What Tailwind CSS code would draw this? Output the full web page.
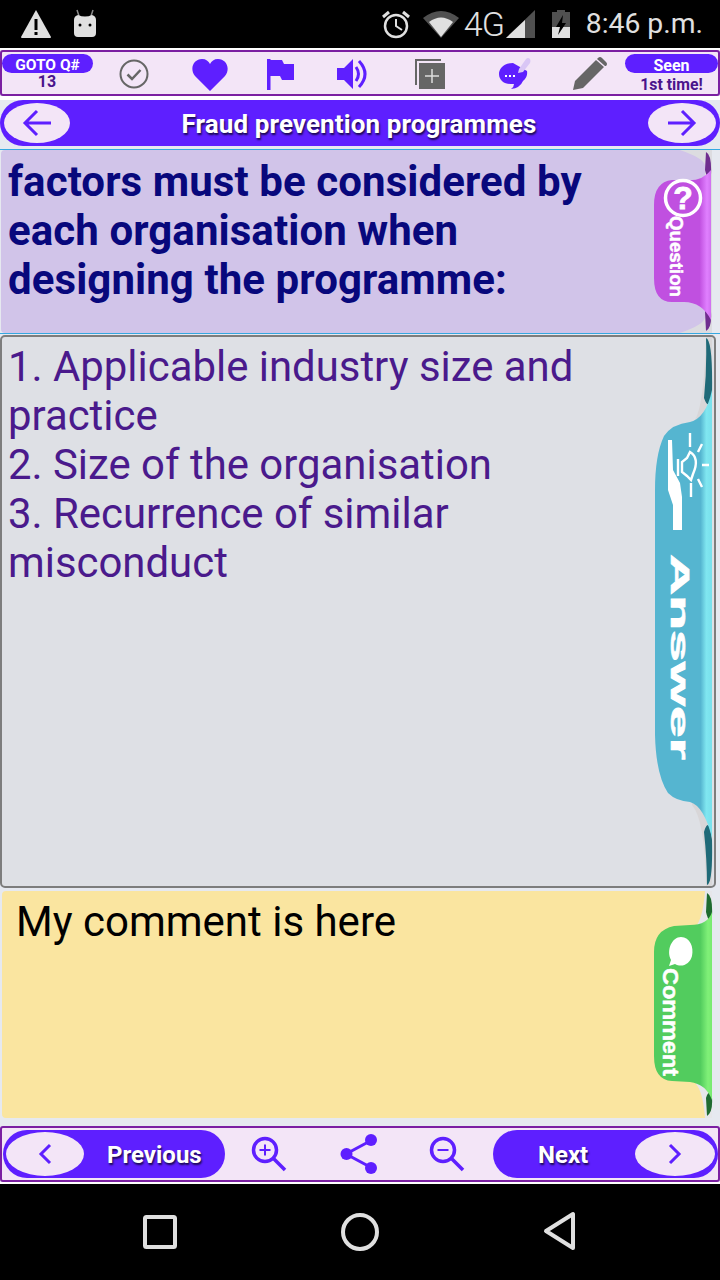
<!DOCTYPE html>
<html lang="en">
<head>
    <meta charset="utf-8">
    <title>Fraud prevention programmes</title>
    <script src="https://cdn.jsdelivr.net/npm/@tailwindcss/browser@4"></script>
</head>

<body class="w-[720px] h-[1280px] overflow-hidden bg-[#e6e9f0] font-['Roboto',sans-serif]">
    <div class="flex flex-col w-[720px] h-[1280px]">

        <!-- Status bar -->
        <div class="relative flex items-center justify-between h-[48px] bg-black text-[#e0e0e0]">
            <div class="flex items-center pl-[20px] gap-[21px]">
                <svg width="32" height="30" viewBox="0 0 32 30"><path d="M16 1 L31 28 Q31 29 30 29 L2 29 Q1 29 1 28 Z" fill="#e0e0e0"/><rect x="14.500" y="10" width="3" height="11" fill="#000"/><rect x="14.500" y="23" width="3" height="3" fill="#000"/></svg>
                <svg width="24" height="30" viewBox="0 0 24 30"><path d="M4 1 L6 7 M20 1 L18 7" stroke="#8a8a8a" stroke-width="1.500"/><path d="M5 6 Q12 9 19 6 Q23 7 23 11 L23 24 Q23 28 19 28 L5 28 Q1 28 1 24 L1 11 Q1 7 5 6 Z" fill="#e0e0e0"/><circle cx="7" cy="16" r="1.500" fill="#000"/><circle cx="17" cy="16" r="1.500" fill="#000"/></svg>
            </div>
            <div class="flex items-center pr-[17px]">
                <svg width="30" height="30" viewBox="0 0 30 30" fill="none" stroke="#e0e0e0"><circle cx="15" cy="17" r="11" stroke-width="2.500"/><path d="M15 10 L15 17 L21 21" stroke-width="2"/><path d="M2 8 L8 3 M28 8 L22 3" stroke-width="3"/></svg>
                <svg class="ml-[12px]" width="36" height="28" viewBox="0 0 36 28"><path d="M0 8 Q18 -6 36 8 L18 28 Z" fill="#505050"/><path d="M6 12 Q18 3 30 12 L18 27 Z" fill="#e0e0e0"/></svg>
                <span class="ml-[5px] w-[41px] text-[34px] leading-[34px] tracking-[-1px] font-light">4G</span>
                <svg class="ml-[1px]" width="30" height="30" viewBox="0 0 30 30"><path d="M0 29 L29 1 L29 29 Z" fill="#505050"/><path d="M0 29 L19 11 L19 29 Z" fill="#e0e0e0"/></svg>
                <svg class="ml-[15px]" width="20" height="30" viewBox="0 0 20 30"><path d="M6 1 L14 1 L14 3 L19 3 L19 29 L1 29 L1 3 L6 3 Z" fill="#505050"/><path d="M1 18 L19 18 L19 29 L1 29 Z" fill="#e0e0e0"/><path d="M12 6 L5 18 L9 18 L7 26 L15 14 L11 14 Z" fill="#000"/></svg>
                <span class="ml-[15px] text-[28.300px] leading-[34px]">8:46 p.m.</span>
            </div>
        </div>

        <div class="h-[2px] bg-white"></div>

        <!-- Top toolbar -->
        <div class="relative flex items-center h-[46px] bg-[#f3e5f7] border-2 border-[#7b1fa2] rounded-[3px]">
            <div class="absolute left-0 top-[2px] flex flex-col items-center w-[91px]">
                <div class="w-full h-[19px] rounded-full bg-[#5e1fff] text-white text-center text-[15.500px] font-bold leading-[23px]">GOTO Q#</div>
                <div class="pr-[1px] text-[#4a148c] text-[16px] font-bold leading-[18px]">13</div>
            </div>
            <svg class="absolute left-[117px] top-[7px]" width="30" height="30" viewBox="0 0 30 30" fill="none" stroke="#666"><circle cx="15" cy="15" r="13.500" stroke-width="2"/><path d="M8.500 15.500 L13 20 L21.500 11" stroke-width="2.500"/></svg>
            <svg class="absolute left-[190px] top-[6px]" width="36" height="33" viewBox="0 0 36 33"><path d="M18 33 L3 18 C-3 10 2 1 10 1 C14 1 16.500 3 18 6 C19.500 3 22 1 26 1 C34 1 39 10 33 18 Z" fill="#5e1fff"/></svg>
            <svg class="absolute left-[265px] top-[7px]" width="28" height="31" viewBox="0 0 28 31"><path d="M0 0 L3.500 0 L3.500 31 L0 31 Z M3.500 1 L15 1 L17 5 L27 5 L27 21 L15 21 L13 17 L3.500 17 Z" fill="#5e1fff"/></svg>
            <svg class="absolute left-[335px] top-[7px]" width="32" height="30" viewBox="0 0 32 30"><path d="M0 9 L7 9 L16 0 L16 30 L7 21 L0 21 Z" fill="#5e1fff"/><path d="M19 8 Q24 15 19 22" fill="none" stroke="#5e1fff" stroke-width="3"/><path d="M22 2 Q34 15 22 28" fill="none" stroke="#5e1fff" stroke-width="3"/></svg>
            <svg class="absolute left-[413px] top-[6px]" width="31" height="31" viewBox="0 0 31 31"><path d="M0 1 L26 1 L26 3 L2 3 L2 27 L0 27 Z" fill="#666"/><rect x="4" y="5" width="26" height="26" fill="#666"/><path d="M17 11 L17 25 M10 18 L24 18" stroke="#ddd" stroke-width="1.500"/></svg>
            <svg class="absolute left-[497px] top-[5px]" width="32" height="33" viewBox="0 0 32 33"><path d="M14 6 C4 6 0 12 0 17 C0 23 5 27 11 27 L15 27 Q15 30 12 32 Q21 31 24 24 Q29 20 28 14 Z" fill="#5e1fff"/><path d="M20 12 L27 2 Q29 0 31 2 Q32 4 31 6 L24 15 L19 16 Z" fill="#d9c6f5"/><path d="M6 18 h2 v2 h-2 z M10 18 h2 v2 h-2 z M14 18 h2 v2 h-2 z" fill="#fff"/></svg>
            <svg class="absolute left-[571px] top-[5px]" width="34" height="33" viewBox="0 0 34 33"><path d="M0 33 L2 24 L23 3 L31 10 L10 31 Z M25 1 Q27 -1 29 1 L33 5 Q35 7 33 9 L32 9 L24 2 Z" fill="#666"/></svg>
            <div class="absolute right-0 top-[2px] flex flex-col items-center w-[93px]">
                <div class="w-full h-[19px] rounded-full bg-[#5e1fff] text-white text-center text-[16px] font-bold leading-[23px]">Seen</div>
                <div class="mt-[2px] text-[#4a148c] text-[15.800px] font-bold leading-[19px]">1st time!</div>
            </div>
        </div>

        <div class="h-[4px] bg-white"></div>

        <!-- Title bar -->
        <div class="flex items-center justify-between h-[46px] px-[4px] rounded-full bg-[#5e1fff]">
            <div class="flex items-center justify-center w-[66px] h-[40px] rounded-[50%] bg-[#f3e5f7]">
                <svg width="30" height="28" viewBox="0 0 30 28" fill="none" stroke="#5e1fff" stroke-width="3"><path d="M29 14 L3 14 M15 2 L3 14 L15 26"/></svg>
            </div>
            <div class="pt-[2px] text-white text-[26px] font-bold leading-[30px] tracking-[0.100px] [text-shadow:1px_2px_2px_#1a0a50]">Fraud prevention programmes</div>
            <div class="flex items-center justify-center w-[68px] h-[40px] rounded-[50%] bg-[#f3e5f7]">
                <svg width="30" height="28" viewBox="0 0 30 28" fill="none" stroke="#5e1fff" stroke-width="3"><path d="M1 14 L27 14 M15 2 L27 14 L15 26"/></svg>
            </div>
        </div>

        <div class="h-[3px]"></div>
        <div class="h-px bg-[#35a8e0]"></div>

        <!-- Question -->
        <div class="relative h-[183px] ml-[1px] mr-[8px] bg-[#d1c4e9] rounded-[4px] px-[7px] pt-[7px]">
            <p class="w-[640px] text-[#08087c] text-[42px] font-bold leading-[49px] tracking-[0.080px]">factors must be considered by each organisation when designing the programme:</p>
            <svg class="absolute left-[639px] top-0" width="80" height="183" viewBox="640 150 80 183">
                <defs>
                    <linearGradient id="q" x1="0" x2="1" y1="0" y2="0"><stop offset="0.800" stop-color="#c050e0"/><stop offset="0.930" stop-color="#e080ff"/><stop offset="1" stop-color="#d070f0"/></linearGradient>
                </defs>
                <path d="M680 150 L712 150 L712 333 L680 333 Q703 325 705 318 L705 165 Q703 158 680 150 Z" fill="#dcdce0"/>
                <path d="M706 152 Q712 155 711 175 Q708 183 705 170 Z M705 312 Q708 302 711 312 Q712 328 706 331 Z" fill="#6f2d8f"/>
                <path d="M711 170 Q702 182 684 180 L672 180 Q654 182 654 205 L654 278 Q654 302 672 302 L684 302 Q702 302 711 320 Z" fill="url(#q)"/>
                <circle cx="683" cy="198" r="17.500" fill="none" stroke="#fff" stroke-width="3.500"/>
                <text x="683" y="209" text-anchor="middle" font-size="32" font-weight="700" font-family="Liberation Sans" fill="#fff" stroke="#fff" stroke-width="0.800">?</text>
                <text transform="translate(670 216) rotate(90)" font-size="19" font-weight="700" font-family="Liberation Sans" fill="#fff" stroke="#fff" stroke-width="0.500" textLength="81" lengthAdjust="spacingAndGlyphs">Question</text>
            </svg>
        </div>

        <div class="h-px bg-[#35a8e0]"></div>
        <div class="h-px"></div>

        <!-- Answer -->
        <div class="relative h-[553px] mr-[4px] bg-[#dee0e5] border-2 border-[#7d7d7d] rounded-[5px] px-[6px] pt-[5px]">
            <p class="w-[640px] text-[#4a1a8c] text-[41.900px] leading-[49px]">1. Applicable industry size and practice<br>2. Size of the organisation<br>3. Recurrence of similar misconduct</p>
            <svg class="absolute left-[638px] top-[-2px]" width="80" height="553" viewBox="640 335 80 553">
                <defs>
                    <linearGradient id="a" x1="0" x2="1" y1="0" y2="0"><stop offset="0.800" stop-color="#55b5d0"/><stop offset="0.900" stop-color="#80e6f0"/><stop offset="1" stop-color="#78e0ec"/></linearGradient>
                </defs>
                <path d="M695 420 Q704 405 706 337 L712 337 L712 886 L706 886 Q705 820 692 805 Z" fill="#d8d6d8"/>
                <path d="M706 338 Q713 340 712 395 Q709 412 704 398 Q707 370 706 338 Z M704 832 Q709 815 712 840 Q713 883 707 885 Q707 860 704 832 Z" fill="#1f6a78"/>
                <path d="M712 390 Q706 418 690 422 Q672 424 664 436 Q655 455 655 490 L655 735 Q656 775 668 793 Q676 801 690 802 Q704 806 712 838 Z" fill="url(#a)"/>
                <g fill="none" stroke="#fff" stroke-width="2.400">
                    <path d="M690 433 L690 447 M702 444 L698 452 M709 465 L702 465 M702 487 L698 479 M691 497 L691 483"/>
                    <path d="M690 452 Q700 458 693 474 L691 480 L687 476 L682 472 L682 462 L687 458 Z"/>
                    <path d="M678 459 L678 476"/>
                </g>
                <path d="M668 440 L672 440 L673 470 L680 483 L682 497 L682 530 L673 530 L673 505 L668 490 Z" fill="#fff"/>
                <text transform="translate(671 554) rotate(90)" font-size="25" font-weight="700" font-family="Liberation Sans" fill="#fff" stroke="#fff" stroke-width="0.600" textLength="206" lengthAdjust="spacingAndGlyphs">Answer</text>
            </svg>
        </div>

        <div class="h-[3px]"></div>

        <!-- Comment -->
        <div class="relative h-[227px] ml-[2px] mr-[8px] bg-[#fae5a0] rounded-[4px] pl-[14px] pt-[6px]">
            <p class="text-black text-[42px] leading-[49px]">My comment is here</p>
            <svg class="absolute left-[638px] top-0" width="80" height="227" viewBox="640 891 80 227">
                <defs>
                    <linearGradient id="c" x1="0" x2="1" y1="0" y2="0"><stop offset="0.800" stop-color="#52cc5e"/><stop offset="0.930" stop-color="#80f078"/><stop offset="1" stop-color="#78ea70"/></linearGradient>
                </defs>
                <path d="M696 926 Q703 918 705 891 L712 891 L712 1118 L705 1118 Q703 1092 696 1084 Z" fill="#e6e6ea"/>
                <path d="M707 893 Q713 896 712 916 Q709 925 706 912 Z M706 1098 Q709 1088 712 1098 Q713 1112 707 1116 Z" fill="#1e6b30"/>
                <path d="M712 912 Q708 925 690 925 L674 926 Q654 930 654 952 L654 1056 Q654 1080 672 1081 L690 1082 Q706 1084 712 1100 Z" fill="url(#c)"/>
                <path d="M681 937 C690 937 694 947 692 956 C690 964 682 968 675 964 L669 966 L671 960 C666 950 672 937 681 937 Z" fill="#fff"/>
                <text transform="translate(663 968) rotate(90)" font-size="22" font-weight="700" font-family="Liberation Sans" fill="#fff" stroke="#fff" stroke-width="0.500" textLength="108" lengthAdjust="spacingAndGlyphs">Comment</text>
            </svg>
        </div>

        <div class="h-[8px]"></div>

        <!-- Bottom bar -->
        <div class="flex items-center h-[56px] pl-[1px] bg-[#f3e5f7] border-2 border-[#7b1fa2] rounded-[3px]">
            <div class="flex items-center w-[222px] h-[48px] pl-[3px] rounded-full bg-[#5e1fff]">
                <div class="flex items-center justify-center w-[78px] h-[44px] rounded-[50%] bg-[#f3e5f7]">
                    <svg width="14" height="22" viewBox="0 0 14 22" fill="none" stroke="#5e1fff" stroke-width="3"><path d="M12 2 L3 11 L12 20"/></svg>
                </div>
                <span class="ml-[23px] pt-[1px] text-white text-[24px] font-bold leading-[30px] [text-shadow:1px_2px_2px_#1a0a50]">Previous</span>
            </div>
            <div class="flex items-center flex-1 pl-[26px]">
                <svg width="36" height="36" viewBox="0 0 36 36" fill="none" stroke="#5e1fff"><circle cx="14" cy="14" r="11.500" stroke-width="3.500"/><path d="M22 22 L34 34" stroke-width="3.500"/><path d="M14 8.500 L14 19.500 M8.500 14 L19.500 14" stroke-width="2"/></svg>
                <svg class="ml-[53px]" width="38" height="42" viewBox="0 0 38 42"><path d="M32 7 L6 21 L32 35" fill="none" stroke="#5e1fff" stroke-width="3"/><circle cx="31" cy="7" r="6" fill="#5e1fff"/><circle cx="6.500" cy="21" r="6" fill="#5e1fff"/><circle cx="31" cy="35" r="6" fill="#5e1fff"/></svg>
                <svg class="ml-[51px]" width="36" height="36" viewBox="0 0 36 36" fill="none" stroke="#5e1fff"><circle cx="14" cy="14" r="11.500" stroke-width="3.500"/><path d="M22 22 L34 34" stroke-width="3.500"/><path d="M8.500 14 L19.500 14" stroke-width="2"/></svg>
            </div>
            <div class="flex items-center justify-between w-[225px] h-[48px] pl-[45px] pr-[3px] rounded-full bg-[#5e1fff]">
                <span class="pt-[1px] text-white text-[24px] font-bold leading-[30px] [text-shadow:1px_2px_2px_#1a0a50]">Next</span>
                <div class="flex items-center justify-center w-[80px] h-[44px] rounded-[50%] bg-[#f3e5f7]">
                    <svg width="14" height="22" viewBox="0 0 14 22" fill="none" stroke="#5e1fff" stroke-width="3"><path d="M2 2 L11 11 L2 20"/></svg>
                </div>
            </div>
        </div>

        <div class="h-[2px] bg-white"></div>

        <!-- Android navigation -->
        <div class="relative flex-1 bg-black">
            <svg class="absolute left-[143px] top-[31px]" width="34" height="34" viewBox="0 0 34 34"><rect x="2" y="2" width="30" height="30" rx="1.500" fill="none" stroke="#e0e0e0" stroke-width="4"/></svg>
            <svg class="absolute left-[341px] top-[29px]" width="38" height="38" viewBox="0 0 38 38"><circle cx="19" cy="19" r="17" fill="none" stroke="#e0e0e0" stroke-width="4"/></svg>
            <svg class="absolute left-[543px] top-[27px]" width="34" height="40" viewBox="0 0 34 40"><path d="M30 3 L30 37 L3 20 Z" fill="none" stroke="#e0e0e0" stroke-width="4" stroke-linejoin="round"/></svg>
        </div>
    </div>
</body>
</html>
